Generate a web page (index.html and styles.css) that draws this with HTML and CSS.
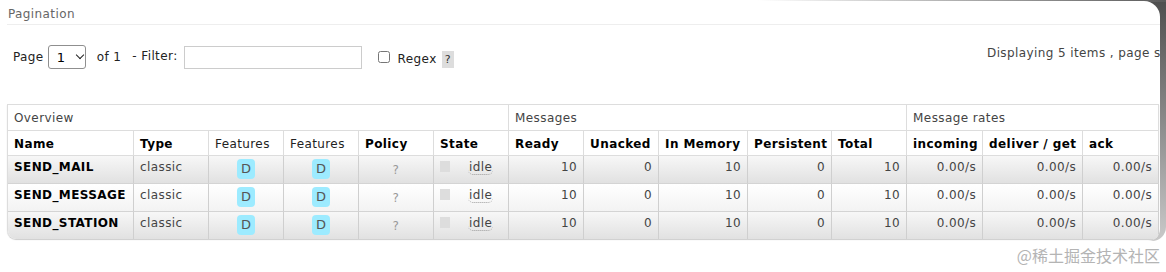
FILE: index.html
```html
<!DOCTYPE html>
<html lang="en">
<head>
  <meta charset="UTF-8" />
  <title>Queues</title>
  <link rel="stylesheet" href="styles.css">
</head>
<body>
  <div class="frame">
    <div class="panel">
      <h3 class="section">Pagination</h3>

      <div class="controls">
        <label class="lbl">Page</label>
        <div class="select">1 <span class="caret"></span></div>
        <span class="lbl of">of 1</span>
        <label class="lbl filter">- Filter:</label>
        <input class="filter-input" type="text" />
        <input class="check" type="checkbox" />
        <label class="lbl regex">Regex</label>
        <span class="help">?</span>
        <span class="info">Displaying 5 items , page size up to: 100</span>
      </div>

      <table class="list">
        <colgroup>
          <col style="width:126px"><col style="width:75px"><col style="width:75px"><col style="width:75px">
          <col style="width:75px"><col style="width:75px"><col style="width:75px"><col style="width:75px">
          <col style="width:89px"><col style="width:84px"><col style="width:75px"><col style="width:76px">
          <col style="width:100px"><col style="width:76px">
        </colgroup>
        <thead>
          <tr class="group">
            <th colspan="6">Overview</th>
            <th colspan="5">Messages</th>
            <th colspan="3">Message rates</th>
          </tr>
          <tr class="head">
            <th>Name</th><th>Type</th><th class="plain">Features</th><th class="plain">Features</th>
            <th>Policy</th><th>State</th><th>Ready</th><th>Unacked</th><th>In Memory</th>
            <th>Persistent</th><th>Total</th><th>incoming</th><th>deliver / get</th><th>ack</th>
          </tr>
        </thead>
        <tbody>
          <tr class="alt1">
            <td class="name">SEND_MAIL</td><td>classic</td>
            <td class="c"><span class="badge">D</span></td><td class="c"><span class="badge">D</span></td>
            <td class="c"><span class="q">?</span></td>
            <td><span class="state"><span class="dot"></span><abbr>idle</abbr></span></td>
            <td class="r">10</td><td class="r">0</td><td class="r">10</td><td class="r">0</td><td class="r">10</td>
            <td class="r">0.00/s</td><td class="r">0.00/s</td><td class="r">0.00/s</td>
          </tr>
          <tr class="alt2">
            <td class="name">SEND_MESSAGE</td><td>classic</td>
            <td class="c"><span class="badge">D</span></td><td class="c"><span class="badge">D</span></td>
            <td class="c"><span class="q">?</span></td>
            <td><span class="state"><span class="dot"></span><abbr>idle</abbr></span></td>
            <td class="r">10</td><td class="r">0</td><td class="r">10</td><td class="r">0</td><td class="r">10</td>
            <td class="r">0.00/s</td><td class="r">0.00/s</td><td class="r">0.00/s</td>
          </tr>
          <tr class="alt1 last">
            <td class="name">SEND_STATION</td><td>classic</td>
            <td class="c"><span class="badge">D</span></td><td class="c"><span class="badge">D</span></td>
            <td class="c"><span class="q">?</span></td>
            <td><span class="state"><span class="dot"></span><abbr>idle</abbr></span></td>
            <td class="r">10</td><td class="r">0</td><td class="r">10</td><td class="r">0</td><td class="r">10</td>
            <td class="r">0.00/s</td><td class="r">0.00/s</td><td class="r">0.00/s</td>
          </tr>
        </tbody>
      </table>
    </div>
  </div>

  <div class="watermark">@稀土掘金技术社区</div>
</body>
</html>
```

FILE: styles.css
```css
* {
  box-sizing: border-box;
}

body {
  margin: 0;
  background: #fff;
  font-family: "DejaVu Sans", Verdana, sans-serif;
  font-size: 12px;
  letter-spacing: 0.4px;
  color: #444;
}

.frame {
  width: 1166px;
  height: 241px;
  padding-top: 1px;
  background:
    linear-gradient(to right, rgba(255,255,255,1) 65%, rgba(90,90,90,1)) top left / 100% 2px no-repeat,
    linear-gradient(#4e4e4e, #8a8a8a 50%, #c9c9c9);
  border-bottom-right-radius: 14px;
}

.panel {
  width: 1160px;
  height: 240px;
  background: #fff;
  border-top-right-radius: 16px;
  border-bottom-right-radius: 12px;
  overflow: hidden;
}

.section {
  margin: 0 0 0 7px;
  padding: 6px 0 3px 1px;
  font-size: 12px;
  font-weight: normal;
  color: #666;
  border-bottom: 1px solid #eee;
}

.controls {
  display: flex;
  align-items: center;
  width: 1287px;
  height: 24px;
  margin-top: 20px;
  padding-left: 13px;
  color: #000;
}

.lbl {
  color: #222;
}

.select {
  display: flex;
  align-items: center;
  gap: 12px;
  width: 38px;
  height: 24px;
  margin-left: 4px;
  padding-left: 8px;
  border: 1px solid #8f8f8f;
  border-radius: 3px;
  font-size: 13px;
}

.caret {
  width: 6px;
  height: 6px;
  border-right: 1.5px solid #222;
  border-bottom: 1.5px solid #222;
  transform: rotate(45deg);
  margin-top: -4px;
}

.of {
  margin-left: 11px;
}

.filter {
  margin-left: 11px;
  margin-top: -2px;
}

.filter-input {
  width: 178px;
  height: 23px;
  margin: 0 0 0 6px;
  border: 1px solid #ccc;
}

.check {
  width: 12px;
  height: 12px;
  margin: 0 0 0 16px;
}

.regex {
  margin-left: 8px;
  margin-top: 4px;
}

.help {
  display: inline-block;
  margin-left: 5px;
  margin-top: 4px;
  padding: 2px 3px;
  background: #ddd;
  color: #333;
  font-size: 11px;
}

.info {
  margin-left: auto;
  flex: 0 0 300px;
  white-space: nowrap;
  margin-top: -8px;
  color: #444;
}

.list {
  margin: 35px 0 0 7px;
  width: 1152px;
  table-layout: fixed;
  border-collapse: separate;
  border-spacing: 0;
  border-left: 1px solid #ddd;
  border-top: 1px solid #ddd;
  border-bottom-left-radius: 9px;
  overflow: hidden;
  box-shadow: 0 1px 1px #ccc;
}

.list th,
.list td {
  padding: 0 6px;
  text-align: left;
  white-space: nowrap;
  overflow: hidden;
  border-right: 1px solid #ddd;
  border-bottom: 1px solid #ddd;
}

.list .group th {
  height: 26px;
  font-weight: normal;
  color: #444;
  padding-top: 1px;
}

.list .head th {
  height: 25px;
  font-weight: bold;
  color: #000;
  padding-top: 2px;
}

.list .head th.plain {
  font-weight: normal;
  color: #222;
}

.list td {
  height: 28px;
  vertical-align: top;
  padding-top: 4px;
  color: #444;
  border-right-color: #cfcfcf;
  border-bottom-color: #d4d4d4;
}

.list .last td {
  height: 27px;
  border-bottom: none;
}

.alt1 td {
  background: linear-gradient(#f7f7f7, #e1e1e1);
}

.alt2 td {
  background: linear-gradient(#ffffff, #f3f3f3);
}

.list td.name {
  font-weight: bold;
  color: #000;
}

.list td.r {
  text-align: right;
}

.list td.c {
  text-align: center;
}

.badge {
  display: inline-block;
  width: 18px;
  height: 20px;
  line-height: 20px;
  margin-top: -1px;
  border-radius: 4px;
  background: #9debff;
  color: #555;
  font-size: 13px;
  letter-spacing: 0;
  text-align: center;
}

.q {
  display: inline-block;
  margin-top: 3px;
  color: #999;
  font-size: 12px;
}

.state {
  display: flex;
  align-items: flex-start;
  gap: 18px;
}

.dot {
  width: 10px;
  height: 11px;
  margin-top: 1px;
  background: #ddd;
}

abbr {
  text-decoration: none;
  border-bottom: 1px dotted #999;
  border-radius: 0 0 5px 5px;
  padding: 0 1px;
  color: #444;
}

.watermark {
  padding: 2px 6px 0 0;
  text-align: right;
  font-family: "Noto Sans CJK SC", sans-serif;
  font-size: 16px;
  letter-spacing: 0;
  color: #b4b4b4;
}
```
